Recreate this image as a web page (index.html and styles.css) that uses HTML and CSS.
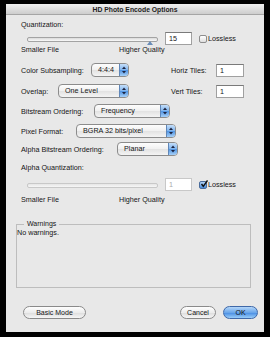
FILE: index.html
```html
<!DOCTYPE html>
<html lang="en">
<head>
    <meta charset="UTF-8">
    <meta name="viewport" content="width=device-width, initial-scale=1.0">
    <title>HD Photo Encode Options</title>
    <link rel="stylesheet" href="styles.css">
</head>
<body>
    <div class="window">
        <div class="titlebar">HD Photo Encode Options</div>
        <div class="content">
            <div class="caption q-caption">Quantization:</div>
            <div class="slider-row">
                <div class="slider">
                    <div class="track"></div>
                    <div class="thumb"></div>
                </div>
                <div class="field">15</div>
                <span class="checkbox"></span>
                <span class="check-label">Lossless</span>
            </div>
            <div class="scale-row">
                <span class="scale-min">Smaller File</span>
                <span>Higher Quality</span>
            </div>

            <div class="form-row row-color">
                <span class="lbl lbl-color">Color Subsampling:</span>
                <div class="popup popup-color">
                    <span class="popup-text">4:4:4</span>
                    <span class="popup-arrows"><svg width="8" height="12" viewBox="0 0 8 12"><polygon points="2,5 4,2.5 6,5" fill="#1b2340"/><polygon points="2,7 4,9.5 6,7" fill="#1b2340"/></svg></span>
                </div>
                <span class="tile-label">Horiz Tiles:</span>
                <div class="field tile-field">1</div>
            </div>
            <div class="form-row row-overlap">
                <span class="lbl lbl-overlap">Overlap:</span>
                <div class="popup popup-overlap">
                    <span class="popup-text">One Level</span>
                    <span class="popup-arrows"><svg width="8" height="12" viewBox="0 0 8 12"><polygon points="2,5 4,2.5 6,5" fill="#1b2340"/><polygon points="2,7 4,9.5 6,7" fill="#1b2340"/></svg></span>
                </div>
                <span class="tile-label">Vert Tiles:</span>
                <div class="field tile-field">1</div>
            </div>
            <div class="form-row row-bitstream">
                <span class="lbl lbl-bitstream">Bitstream Ordering:</span>
                <div class="popup popup-bitstream">
                    <span class="popup-text">Frequency</span>
                    <span class="popup-arrows"><svg width="8" height="12" viewBox="0 0 8 12"><polygon points="2,5 4,2.5 6,5" fill="#1b2340"/><polygon points="2,7 4,9.5 6,7" fill="#1b2340"/></svg></span>
                </div>
            </div>
            <div class="form-row row-pixel">
                <span class="lbl lbl-pixel">Pixel Format:</span>
                <div class="popup popup-pixel">
                    <span class="popup-text">BGRA 32 bits/pixel</span>
                    <span class="popup-arrows"><svg width="8" height="12" viewBox="0 0 8 12"><polygon points="2,5 4,2.5 6,5" fill="#1b2340"/><polygon points="2,7 4,9.5 6,7" fill="#1b2340"/></svg></span>
                </div>
            </div>
            <div class="form-row row-alpha">
                <span class="lbl lbl-alpha">Alpha Bitstream Ordering:</span>
                <div class="popup popup-alpha">
                    <span class="popup-text">Planar</span>
                    <span class="popup-arrows"><svg width="8" height="12" viewBox="0 0 8 12"><polygon points="2,5 4,2.5 6,5" fill="#1b2340"/><polygon points="2,7 4,9.5 6,7" fill="#1b2340"/></svg></span>
                </div>
            </div>

            <div class="caption aq-caption">Alpha Quantization:</div>
            <div class="slider-row alpha-slider">
                <div class="slider">
                    <div class="track disabled"></div>
                </div>
                <div class="field disabled">1</div>
                <span class="checkbox checked"><svg width="8" height="8" viewBox="0 0 8 8"><path d="M1.5 4 L3.3 6.3 L7.5 0.5" fill="none" stroke="#111" stroke-width="1.4"/></svg></span>
                <span class="check-label">Lossless</span>
            </div>
            <div class="scale-row alpha-scale">
                <span class="scale-min">Smaller File</span>
                <span>Higher Quality</span>
            </div>

            <fieldset class="group">
                <legend>Warnings</legend>
                <div class="warn-text">No warnings.</div>
            </fieldset>

            <div class="buttons">
                <div class="btn btn-basic">Basic Mode</div>
                <div class="btn btn-cancel">Cancel</div>
                <div class="btn btn-ok">OK</div>
            </div>
        </div>
    </div>
</body>
</html>
```

FILE: styles.css
```css
body {
    margin: 0;
    background-color: #000;
    font-family: "Liberation Sans", Arial, sans-serif;
    font-size: 7.2px;
    color: #151515;
}

.window {
    margin: 4px 0 0 6px;
    width: 258px;
    height: 328px;
    background-color: #e8e8e8;
}

.titlebar {
    height: 10px;
    line-height: 11px;
    border-bottom: 1px solid #a5a5a5;
    background: linear-gradient(#efefef, #cdcdcd);
    text-align: center;
    font-weight: bold;
    font-size: 6.8px;
    color: #222;
}

.content {
    padding: 0 6px 0 15px;
}

.caption {
    height: 10px;
    line-height: 10px;
}

.q-caption {
    margin-top: 5px;
}

.aq-caption {
    margin-top: 7px;
}

.slider-row {
    display: flex;
    align-items: center;
    height: 13px;
    margin-top: 2px;
}

.alpha-slider {
    margin-top: 5px;
}

.slider {
    position: relative;
    width: 131px;
    height: 13px;
    margin-left: 6px;
}

.track {
    margin-top: 5px;
    height: 3px;
    border: 1px solid #a3a3a3;
    border-radius: 2px;
    background: linear-gradient(#dadada, #fafafa);
}

.track.disabled {
    border-color: #c8c8c8;
    background: linear-gradient(#e6e6e6, #f6f6f6);
}

.thumb {
    position: absolute;
    left: 120px;
    top: 9px;
    width: 0;
    height: 0;
    border-left: 3px solid transparent;
    border-right: 3px solid transparent;
    border-bottom: 4px solid #6a8db8;
}

.field {
    width: 27px;
    height: 13px;
    box-sizing: border-box;
    margin-left: 7px;
    padding-left: 3px;
    border: 1px solid #a0a0a0;
    border-top-color: #7a7a7a;
    background-color: #fff;
    line-height: 11px;
}

.field.disabled {
    color: #aaa;
    border-color: #c8c8c8;
}

.checkbox {
    display: block;
    width: 8px;
    height: 8px;
    box-sizing: border-box;
    margin-left: 7px;
    border: 1px solid #8d8d8d;
    border-radius: 2px;
    background: linear-gradient(#fff, #dedede);
}

.checkbox.checked {
    position: relative;
    border-color: #4a6c9c;
    background: linear-gradient(#b2d3f6, #4a8ddc);
}

.checkbox.checked svg {
    position: absolute;
    left: 0;
    top: -2px;
}

.check-label {
    margin-left: 1px;
}

.scale-row {
    display: flex;
    height: 10px;
    line-height: 10px;
}

.alpha-scale {
    margin-top: 4px;
}

.scale-min {
    width: 98px;
}

.form-row {
    display: flex;
    align-items: center;
    height: 14px;
}

.row-color {
    margin-top: 8px;
}

.row-overlap {
    margin-top: 7px;
}

.row-bitstream,
.row-pixel {
    margin-top: 6px;
}

.row-alpha {
    margin-top: 4px;
}

.lbl-color { width: 70px; }
.lbl-overlap { width: 37px; }
.lbl-bitstream { width: 73px; }
.lbl-pixel { width: 55px; }
.lbl-alpha { width: 96px; }

.popup {
    display: flex;
    height: 14px;
    box-sizing: border-box;
    border: 1px solid #8c8c8c;
    border-radius: 4px;
    background: linear-gradient(#fdfdfd, #f0f0f0 50%, #e2e2e2 51%, #f4f4f4);
    overflow: hidden;
}

.popup-color { width: 38px; }
.popup-overlap { width: 71px; }
.popup-bitstream { width: 76px; }
.popup-pixel { width: 100px; }
.popup-alpha { width: 61px; }

.popup-text {
    flex: 1;
    padding-left: 6px;
    line-height: 12px;
}

.popup-arrows {
    width: 8px;
    border-left: 1px solid #5f86b8;
    background: linear-gradient(#c4defa, #7fb4ee 50%, #4f93e2 51%, #a6d0f8);
}

.popup-arrows svg {
    display: block;
}

.tile-label {
    width: 45px;
    margin-left: 42px;
}

.tile-field {
    width: 28px;
    margin-left: 0;
}

.group {
    margin: 15px 0 0 -5px;
    padding: 0;
    width: 235px;
    height: 68px;
    min-width: 0;
    box-sizing: border-box;
    border: 1px solid #bdbdbd;
}

.group legend {
    margin-left: 7px;
    padding: 0 3px;
    line-height: 8px;
    font-size: 7px;
}

.warn-text {
    line-height: 9px;
}

.buttons {
    display: flex;
    margin-top: 18px;
}

.btn {
    height: 13px;
    box-sizing: border-box;
    border: 1px solid #8a8a8a;
    border-radius: 7px;
    background: linear-gradient(#fefefe, #ececec 50%, #dcdcdc 51%, #f6f6f6);
    text-align: center;
    line-height: 11px;
    font-size: 7px;
}

.btn-basic {
    width: 63px;
    margin-left: 2px;
}

.btn-cancel {
    width: 36px;
    margin-left: auto;
}

.btn-ok {
    width: 35px;
    margin-left: 7px;
    border-color: #3f68a8;
    background: linear-gradient(#b4d6f9, #6aa6ea 50%, #448ae2 51%, #9acdf9);
}
```
